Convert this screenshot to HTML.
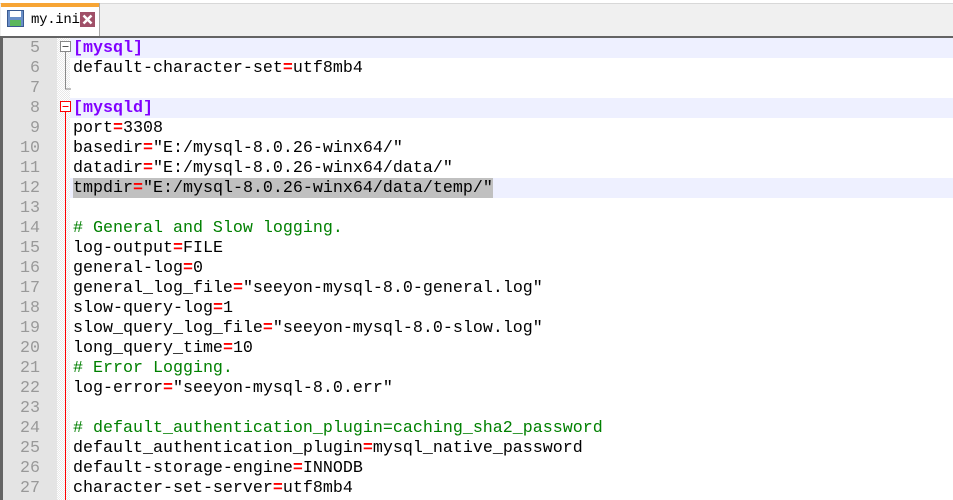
<!DOCTYPE html><html><head><style>
body{margin:0;width:953px;height:500px;overflow:hidden;background:#fff;position:relative;font-family:"Liberation Mono",monospace}
.bar{position:absolute;left:0;top:3px;width:953px;height:32px;background:#f0f0f0;border-top:1px solid #d8d8d8;border-bottom:1px solid #d0d0d0}
.tab{position:absolute;left:1px;top:3px;width:98px;height:33px;background:#fff;border-right:1px solid #aaa}
.tab .o{height:4px;background:#f7a535}
.sep{position:absolute;left:0;top:36px;width:953px;height:2px;background:#646464}
.gut{position:absolute;left:0;top:38px;width:57px;height:462px;background:#e4e4e4;border-left:3px solid #646464;box-sizing:border-box}
.fold{position:absolute;left:57px;top:38px;width:13px;height:462px;background-image:repeating-conic-gradient(#e8e8e8 0 25%,#fff 0 50%);background-size:2px 2px}
.ln{position:absolute;left:0;width:40px;text-align:right;color:#999;font-size:16.67px;line-height:20px;padding-top:1px}
.l{position:absolute;left:73px;font-size:16.67px;line-height:20px;white-space:pre;color:#000;padding-top:1px}
.hl{position:absolute;left:70px;width:883px;height:20px;background:#eef0ff}
.s{color:#8000ff;font-weight:bold}.e{color:#f00;font-weight:bold}.c{color:#008000}
</style></head><body>
<div class="bar"></div>
<div class="tab"><div class="o"></div>
<svg style="position:absolute;left:6px;top:7px" width="17" height="17"><rect x="0.5" y="0.5" width="16" height="16" fill="#6a8fc8" stroke="#3a5a90"/><rect x="3" y="1" width="11" height="6" fill="#fff"/><rect x="3" y="10" width="11" height="6" fill="#5cb85c"/></svg>
<span style="position:absolute;left:30px;top:9px;font-size:14px;letter-spacing:-0.3px">my.ini</span>
<svg style="position:absolute;left:79px;top:9px" width="15" height="15"><rect width="15" height="15" fill="#a05068"/><path d="M3.5 3.5L11.5 11.5M11.5 3.5L3.5 11.5" stroke="#fff" stroke-width="2.5"/></svg>
</div>
<div class="sep"></div>
<div class="gut"></div>
<div class="fold"></div>
<div class="hl" style="top:38px"></div>
<div class="hl" style="top:98px"></div>
<div class="hl" style="top:178px"></div>
<div style="position:absolute;left:73px;top:178px;width:420px;height:20px;background:#c0c0c0"></div>
<svg style="position:absolute;left:57px;top:38px" width="14" height="462">
<rect x="3.5" y="3.5" width="10" height="10" fill="#fff" stroke="#888"/><path d="M5.5 8.5H11.5" stroke="#555"/>
<path d="M8.5 14V51H14" stroke="#888" fill="none"/>
<rect x="3.5" y="63.5" width="10" height="10" fill="#fff" stroke="#f00"/><path d="M5.5 68.5H11.5" stroke="#f00"/>
<path d="M8.5 74V462" stroke="#f00"/>
</svg>
<div id="c"></div>
<script>
const L=[
'<span class="s">[mysql]</span>',
'default-character-set<span class="e">=</span>utf8mb4',
'',
'<span class="s">[mysqld]</span>',
'port<span class="e">=</span>3308',
'basedir<span class="e">=</span>"E:/mysql-8.0.26-winx64/"',
'datadir<span class="e">=</span>"E:/mysql-8.0.26-winx64/data/"',
'tmpdir<span class="e">=</span>"E:/mysql-8.0.26-winx64/data/temp/"',
'',
'<span class="c"># General and Slow logging.</span>',
'log-output<span class="e">=</span>FILE',
'general-log<span class="e">=</span>0',
'general_log_file<span class="e">=</span>"seeyon-mysql-8.0-general.log"',
'slow-query-log<span class="e">=</span>1',
'slow_query_log_file<span class="e">=</span>"seeyon-mysql-8.0-slow.log"',
'long_query_time<span class="e">=</span>10',
'<span class="c"># Error Logging.</span>',
'log-error<span class="e">=</span>"seeyon-mysql-8.0.err"',
'',
'<span class="c"># default_authentication_plugin=caching_sha2_password</span>',
'default_authentication_plugin<span class="e">=</span>mysql_native_password',
'default-storage-engine<span class="e">=</span>INNODB',
'character-set-server<span class="e">=</span>utf8mb4'];
let h='';L.forEach((t,i)=>{const y=38+i*20;h+=`<div class="ln" style="top:${y}px">${i+5}</div><div class="l" style="top:${y}px">${t}</div>`});
document.getElementById('c').innerHTML=h;
</script>
</body></html>
